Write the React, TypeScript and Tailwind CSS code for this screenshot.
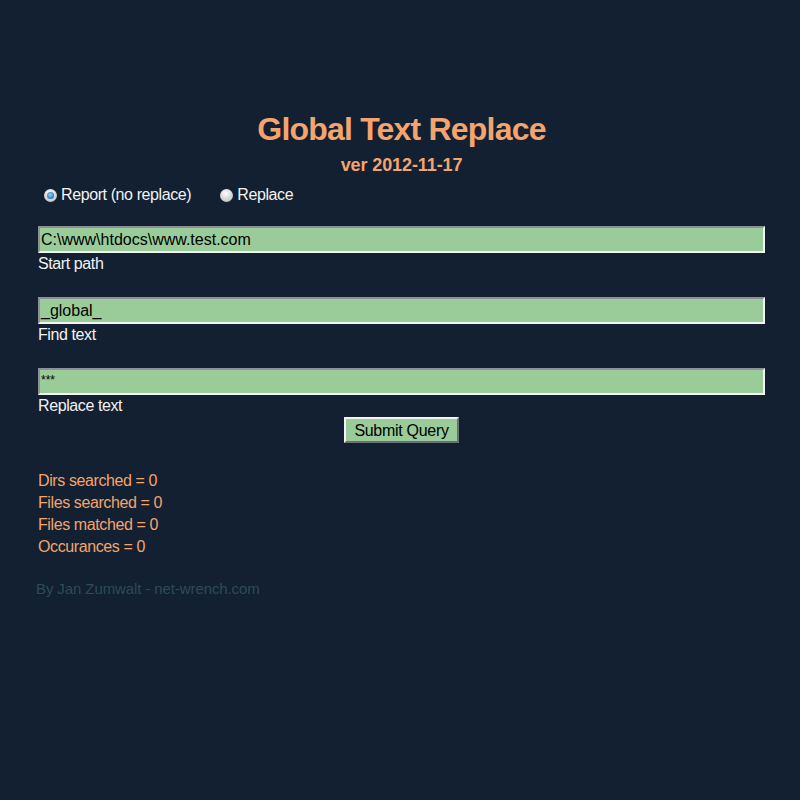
import React, { useState } from 'react';

type Mode = 'report' | 'replace';

const Radio: React.FC<{ checked: boolean; label: string; onClick: () => void }> = ({ checked, label, onClick }) => (
    <label className="flex items-center cursor-pointer" onClick={onClick}>
        <span className="w-[13px] h-[13px] rounded-full bg-[radial-gradient(circle_at_45%_35%,#ffffff,#c8c8c8_70%,#8a8a8a)] flex items-center justify-center">
            {checked && (
                <span className="w-[7px] h-[7px] rounded-full bg-[radial-gradient(circle_at_45%_40%,#9fd0f0,#2a86c8_60%,#1b5f95)]" />
            )}
        </span>
        <span className="ml-[4px]">{label}</span>
    </label>
);

const Field: React.FC<{ value: string; label: string; small?: boolean }> = ({ value, label, small }) => (
    <div>
        <div
            className={
                'h-[27px] bg-[#99cc99] border-[2px] border-t-[#8d8f99] border-l-[#8d8f99] border-b-[#f3f3f3] border-r-[#f3f3f3] flex pl-[1px] text-black ' +
                (small ? 'text-[12px] items-start pt-[1px]' : 'text-[16px] items-center')
            }
        >
            {value}
        </div>
        <div className="text-[16px] leading-[20px] mt-[1px] tracking-[-0.4px] text-[#f2f2f2]">{label}</div>
    </div>
);

export default function App() {
    const [mode, setMode] = useState<Mode>('report');

    return (
        <div className="min-h-[800px] bg-[#122032] font-['Liberation_Sans',Arial,sans-serif] text-[#f2f2f2]">
            <div className="pt-[110px] pl-[38px] pr-[35px]">
                {/* Header */}
                <h1 className="text-center text-[32px] leading-[38px] font-bold tracking-[-0.8px] text-[#f4a46c]">Global Text Replace</h1>
                <p className="text-center text-[18px] leading-[22px] font-bold tracking-[-0.1px] text-[#f4a46c] mt-[6px]">ver 2012-11-17</p>

                {/* Mode */}
                <div className="flex items-center gap-[29px] mt-[9px] pl-[6px] text-[16px] leading-[20px] tracking-[-0.4px]">
                    <Radio checked={mode === 'report'} label="Report (no replace)" onClick={() => setMode('report')} />
                    <Radio checked={mode === 'replace'} label="Replace" onClick={() => setMode('replace')} />
                </div>

                {/* Fields */}
                <div className="mt-[21px] flex flex-col gap-[23px]">
                    <Field value="C:\www\htdocs\www.test.com" label="Start path" />
                    <Field value="_global_" label="Find text" />
                    <Field value="***" label="Replace text" small />
                </div>

                <div className="flex justify-center mt-[1px]">
                    <button className="h-[26px] px-[8px] bg-[#99cc99] text-black text-[16px] tracking-[-0.3px] border-[2px] border-t-[#f3f3f3] border-l-[#f3f3f3] border-b-[#6d6f79] border-r-[#6d6f79]">
                        Submit Query
                    </button>
                </div>

                {/* Stats */}
                <div className="mt-[27px] text-[16px] leading-[22px] tracking-[-0.4px] text-[#f4a46c]">
                    <div>Dirs searched = 0</div>
                    <div>Files searched = 0</div>
                    <div>Files matched = 0</div>
                    <div>Occurances = 0</div>
                </div>

                <p className="mt-[20px] -ml-[2px] text-[15px] tracking-[-0.1px] text-[#2d4c52]">By Jan Zumwalt - net-wrench.com</p>
            </div>
        </div>
    );
}
